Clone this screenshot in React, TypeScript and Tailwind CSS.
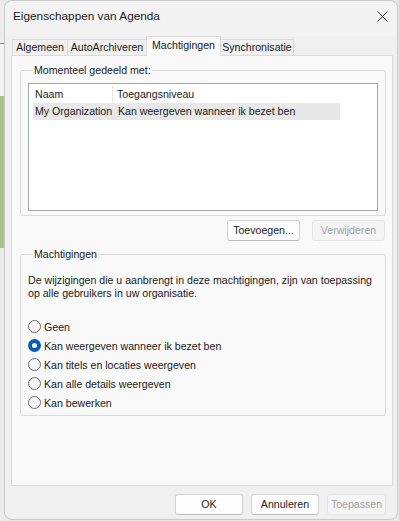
import React from "react";

const font = { fontFamily: '"Liberation Sans", Arial, sans-serif' };

function Radio({ checked, label }: { checked?: boolean; label: string }) {
  return (
    <div className="flex items-center h-[19px]">
      {checked ? (
        <span className="w-[13px] h-[13px] rounded-full bg-[#005fb8] flex items-center justify-center">
          <span className="w-[5px] h-[5px] rounded-full bg-white" />
        </span>
      ) : (
        <span className="w-[13px] h-[13px] rounded-full border border-[#6b6b6b] bg-[#f7f7f7]" />
      )}
      <span className="ml-[3px] text-[10.6px] leading-[16px] text-[#1b1b1b]">{label}</span>
    </div>
  );
}

function Btn({ label, w, disabled }: { label: string; w: number; disabled?: boolean }) {
  return (
    <div
      className={
        "h-[21px] rounded-[3px] border flex items-center justify-center text-[10.6px] " +
        (disabled
          ? "border-[#e5e5e5] bg-[#f5f5f5] text-[#a2a2a2]"
          : "border-[#d2d2d2] border-b-[#bdbdbd] bg-[#fdfdfd] text-[#1b1b1b]")
      }
      style={{ width: w }}
    >
      {label}
    </div>
  );
}

export default function App() {
  const tabs = [
    { label: "Algemeen", w: 56 },
    { label: "AutoArchiveren", w: 80 },
    { label: "Machtigingen", w: 75, active: true },
    { label: "Synchronisatie", w: 74 },
  ];
  return (
    <div className="w-[399px] h-[521px] flex bg-[#e8e8e8] overflow-hidden" style={font}>
      {/* background window strip */}
      <div className="w-[4px] flex flex-col shrink-0">
        <div className="h-[43px] bg-[#ececec]" />
        <div className="h-[1px] bg-[#8a8a8a]" />
        <div className="h-[52px] bg-[#f2f2f2]" />
        <div className="h-[152px] bg-[#a9c48b]" />
        <div className="flex-1 bg-[#ececec]" />
      </div>
      {/* dialog */}
      <div className="flex-1 flex flex-col bg-[#f0f0f0] border border-[#c9c9c9] rounded-t-[8px] rounded-b-[8px] mb-[1px] mr-[1px]">
        {/* title bar */}
        <div className="h-[35px] flex items-start bg-[#f3f3f3] rounded-t-[8px]">
          <div className="pl-[8px] pt-[7px] text-[11.8px] leading-[17px] text-[#1c1c1c]">Eigenschappen van Agenda</div>
          <div className="ml-auto mr-[6px] mt-[6px] w-[18px] h-[18px] flex items-center justify-center">
            <svg width="11" height="11" viewBox="0 0 11 11">
              <path d="M0.5 0.5 L10.5 10.5 M10.5 0.5 L0.5 10.5" stroke="#3a3a3a" strokeWidth="1" fill="none" />
            </svg>
          </div>
        </div>
        {/* tabs */}
        <div className="flex items-end h-[19px] pl-[7px] relative z-10">
          {tabs.map((t) =>
            t.active ? (
              <div
                key={t.label}
                className="h-[20px] -mb-[1px] bg-[#f9f9f9] border border-[#d9d9d9] border-b-0 -ml-[1px] flex items-center justify-center text-[10.6px] text-[#1b1b1b]"
                style={{ width: t.w }}
              >
                <span className="-mt-[2px]">{t.label}</span>
              </div>
            ) : (
              <div
                key={t.label}
                className="h-[16px] bg-[#f0f0f0] border border-[#d9d9d9] border-b-0 -ml-[1px] first:ml-0 flex items-center justify-center text-[10.6px] text-[#1b1b1b]"
                style={{ width: t.w }}
              >
                <span className="mt-[1px]">{t.label}</span>
              </div>
            )
          )}
        </div>
        {/* tab panel */}
        <div className="ml-[6px] mr-[4px] h-[431px] bg-[#f9f9f9] border border-[#dcdcdc] flex flex-col">
          <fieldset className="ml-[8px] mr-[6px] mt-[6px] border border-[#dcdcdc] rounded-[3px] pl-[7px] pr-[7px] pb-[4px]">
            <legend className="ml-[5px] px-[1px] text-[10.6px] leading-[16px] text-[#1b1b1b]">Momenteel gedeeld met:</legend>
            <div className="mt-[5px] h-[128px] bg-white border border-[#a2a6ad] pt-[2px] pl-[4px]">
              <div className="flex w-[307px] h-[16px] text-[10.6px] leading-[16px] text-[#1b1b1b]">
                <div className="w-[80px] pl-[2px] border-r border-[#e5e5e5]">Naam</div>
                <div className="pl-[4px]">Toegangsniveau</div>
              </div>
              <div className="flex w-[307px] h-[17px] mt-[1px] bg-[#e8e8e8] text-[10.6px] leading-[17px] text-[#1b1b1b]">
                <div className="w-[80px] pl-[2px] whitespace-nowrap">My Organization</div>
                <div className="pl-[5px] whitespace-nowrap">Kan weergeven wanneer ik bezet ben</div>
              </div>
            </div>
          </fieldset>
          <div className="flex justify-end gap-[12px] pr-[7px] mt-[4px]">
            <Btn label="Toevoegen..." w={73} />
            <Btn label="Verwijderen" w={73} disabled />
          </div>
          <fieldset className="ml-[8px] mr-[6px] mt-[5px] border border-[#dcdcdc] rounded-[3px] pl-[7px] pr-[7px] pb-[3px]">
            <legend className="ml-[5px] px-[1px] text-[10.6px] leading-[16px] text-[#1b1b1b]">Machtigingen</legend>
            <p className="mt-[12px] text-[10.6px] leading-[13px] text-[#1b1b1b] pr-[4px]">
              De wijzigingen die u aanbrengt in deze machtigingen, zijn van toepassing op alle gebruikers in uw organisatie.
            </p>
            <div className="mt-[17px] flex flex-col">
              <Radio label="Geen" />
              <Radio label="Kan weergeven wanneer ik bezet ben" checked />
              <Radio label="Kan titels en locaties weergeven" />
              <Radio label="Kan alle details weergeven" />
              <Radio label="Kan bewerken" />
            </div>
          </fieldset>
        </div>
        {/* bottom buttons */}
        <div className="flex justify-end gap-[8px] pr-[11px] mt-[8px]">
          <Btn label="OK" w={68} />
          <Btn label="Annuleren" w={68} />
          <Btn label="Toepassen" w={59} disabled />
        </div>
      </div>
    </div>
  );
}
